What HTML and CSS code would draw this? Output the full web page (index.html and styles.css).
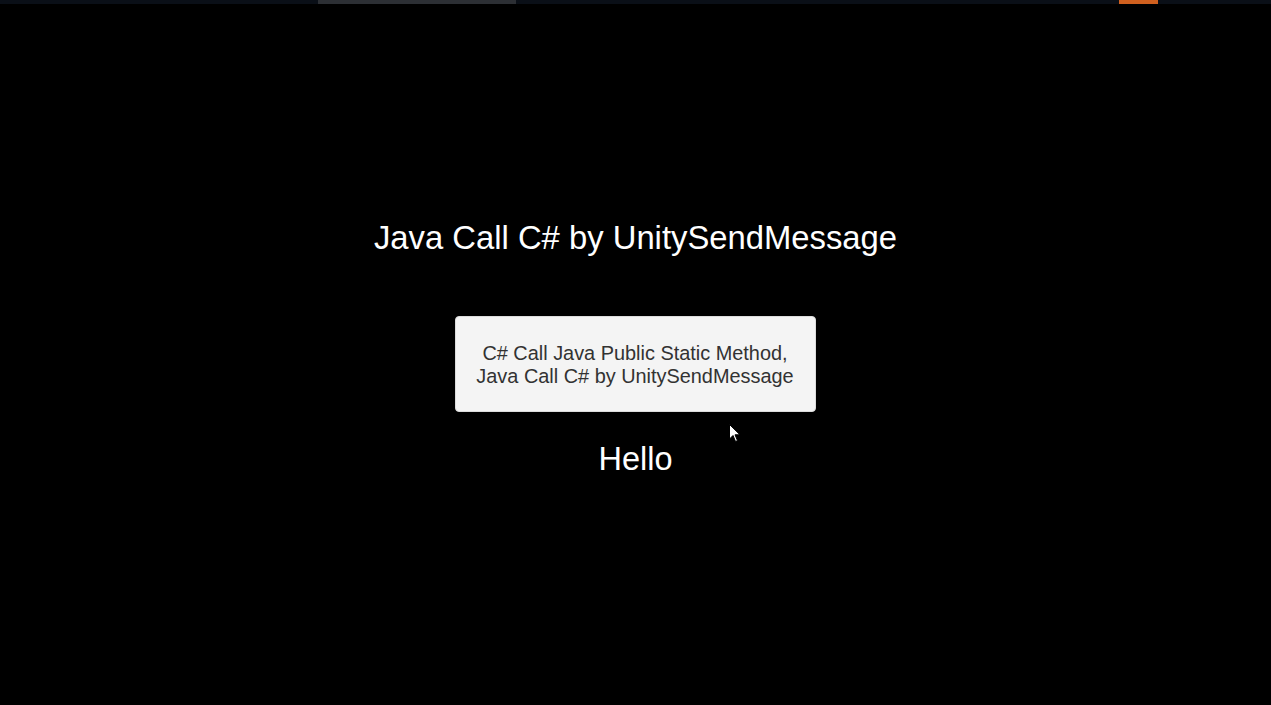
FILE: index.html
```html
<!DOCTYPE html>
<html>
<head>
<meta charset="utf-8">
<link rel="stylesheet" href="styles.css">
</head>
<body>
<div class="topbar">
  <div class="seg seg-gray"></div>
  <div class="seg seg-orange"></div>
</div>
<main class="stage">
  <h1 class="title">Java Call C# by UnitySendMessage</h1>
  <button class="btn">C# Call Java Public Static Method,<br>Java Call C# by UnitySendMessage</button>
  <div class="hello">Hello</div>
</main>
<svg class="cursor" width="12" height="19" viewBox="0 0 12 19"><path d="M0.5 0.5 L0.5 15 L4 11.5 L6.5 17.5 L8.5 16.6 L6 10.8 L11 10.8 Z" fill="#fff" stroke="#000" stroke-width="1"/></svg>
</body>
</html>
```
FILE: styles.css
```css
html, body {
  margin: 0;
  padding: 0;
  background: #000;
  width: 1271px;
  height: 705px;
  overflow: hidden;
  font-family: "Liberation Sans", Arial, sans-serif;
}
body { position: relative; }
.topbar {
  height: 4px;
  background: #0a0f17;
  position: relative;
}
.seg { position: absolute; top: 0; height: 4px; }
.seg-gray { left: 318px; width: 198px; background: #2c2f34; }
.seg-orange { left: 1119px; width: 39px; background: #d0601f; }
.stage {
  display: flex;
  flex-direction: column;
  align-items: center;
}
.title {
  margin: 214px 0 0;
  font-weight: normal;
  font-size: 32.8px;
  line-height: 40px;
  color: #fff;
}
.btn {
  margin-top: 58px;
  margin-right: 1px;
  width: 361px;
  height: 96px;
  background: #f4f4f4;
  border: 1px solid #dcdcdc;
  border-radius: 4px;
  color: #323232;
  font-family: "Liberation Sans", Arial, sans-serif;
  font-size: 19.9px;
  line-height: 23px;
  padding: 2px 0 0;
}
.hello {
  margin-top: 27px;
  font-size: 32.5px;
  line-height: 40px;
  color: #fff;
}
.cursor { position: absolute; left: 729px; top: 424px; }
```
